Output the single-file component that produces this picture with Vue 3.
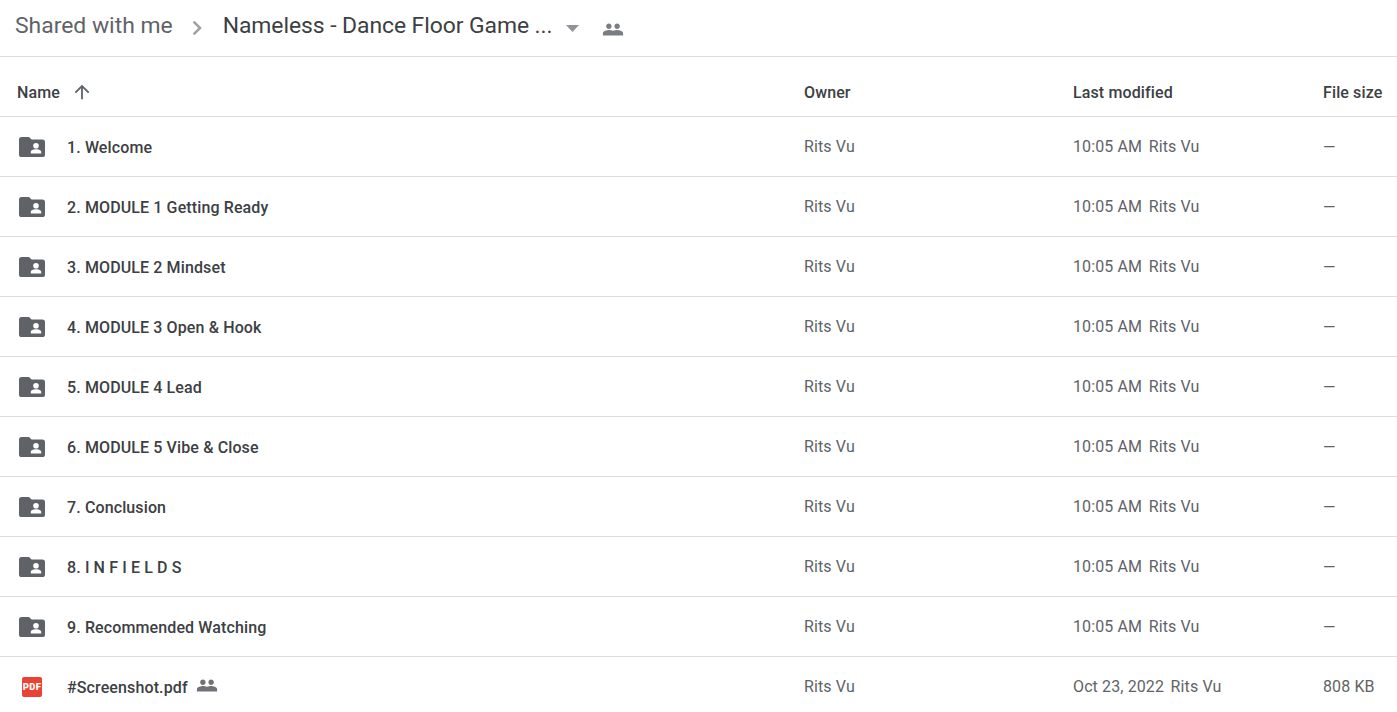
<script setup>
const folders = [
  '1. Welcome',
  '2. MODULE 1 Getting Ready',
  '3. MODULE 2 Mindset',
  '4. MODULE 3 Open & Hook',
  '5. MODULE 4 Lead',
  '6. MODULE 5 Vibe & Close',
  '7. Conclusion',
  '8. I N F I E L D S',
  '9. Recommended Watching'
]
const people = 'M16.5 13c-1.2 0-3.07.34-4.5 1-1.43-.67-3.3-1-4.5-1C5.33 13 1 14.08 1 16.25V19h22v-2.75c0-2.17-4.33-3.25-6.5-3.25zM7.5 12c1.66 0 3-1.34 3-3s-1.34-3-3-3-3 1.34-3 3 1.34 3 3 3zm9 0c1.66 0 3-1.34 3-3s-1.34-3-3-3-3 1.34-3 3 1.34 3 3 3z'
</script>

<template>
  <div class="page">
    <header class="crumbs">
      <span class="crumb-root">Shared with me</span>
      <svg class="chev" width="32" height="32" viewBox="0 0 24 24"><path d="M9.4 6.5 8 7.900l4.100 4.100L8 16.100l1.400 1.400 5.500-5.500z" fill="#a0a3a7"/></svg>
      <span class="crumb-current">Nameless - Dance Floor Game ...</span>
      <svg class="caret" width="13" height="7" viewBox="0 0 14 7" preserveAspectRatio="none"><path d="M0 0h14L7 7z" fill="#8f9296"/></svg>
      <svg class="crumb-people" width="22" height="22" viewBox="0 0 24 24"><path :d="people" fill="#7a7d82"/></svg>
    </header>

    <div class="row head">
      <div class="col-name">
        <span>Name</span>
        <svg class="arrow" width="22" height="22" viewBox="0 0 24 24"><path d="M4 12l1.410 1.410L11 7.830V20h2V7.830l5.580 5.590L20 12l-8-8z" fill="#5f6368"/></svg>
      </div>
      <div class="col-owner">Owner</div>
      <div class="col-mod">Last modified</div>
      <div class="col-size">File size</div>
    </div>

    <div v-for="f in folders" :key="f" class="row item">
      <div class="col-name">
        <svg class="icon" width="26" height="20" viewBox="0 0 26 20">
          <path fill-rule="evenodd" fill="#5f6368" d="M2.600 0H10l2.600 2.400H23.400A2.600 2.600 0 0 1 26 5v12.400A2.600 2.600 0 0 1 23.400 20H2.600A2.600 2.600 0 0 1 0 17.400V2.600A2.600 2.600 0 0 1 2.600 0ZM17 6a2.800 2.800 0 1 0 0 5.600 2.800 2.800 0 0 0 0-5.600ZM11.800 16.500h10.400v-1.700c0-1.800-3.500-2.500-5.200-2.500s-5.200.7-5.200 2.500Z"/>
        </svg>
        <span class="fname">{{ f }}</span>
      </div>
      <div class="col-owner">Rits Vu</div>
      <div class="col-mod"><span class="time">10:05 AM</span><span>Rits Vu</span></div>
      <div class="col-size dash">—</div>
    </div>

    <div class="row item last">
      <div class="col-name">
        <span class="pdf"><span>PDF</span></span>
        <span class="fname">#Screenshot.pdf</span>
        <svg class="file-people" width="22" height="22" viewBox="0 0 24 24"><path :d="people" fill="#6f7276"/></svg>
      </div>
      <div class="col-owner">Rits Vu</div>
      <div class="col-mod"><span class="time">Oct 23, 2022</span><span>Rits Vu</span></div>
      <div class="col-size">808 KB</div>
    </div>
  </div>
</template>

<style scoped>
.page {
  width: 1397px;
  height: 712px;
  overflow: hidden;
  background: #fff;
  font-family: Roboto, "Liberation Sans", sans-serif;
}
.crumbs {
  height: 56px;
  box-sizing: content-box;
  border-bottom: 1px solid #dadce0;
  display: flex;
  align-items: center;
  padding-left: 15px;
  font-family: Roboto, "Open Sans", sans-serif;
  font-size: 22.9px;
  line-height: 52px;
}
.crumb-root { color: #5f6368; padding-bottom: 4px; }
.chev { margin-left: 9px; }
.crumb-current { color: #3c4043; margin-left: 9px; padding-bottom: 4px; letter-spacing: -0.06px; }
.caret { margin-left: 13px; }
.crumb-people { margin-left: 23px; margin-top: 2px; }
.row {
  display: flex;
  align-items: center;
  border-bottom: 1px solid #dadce0;
  font-size: 16px;
  letter-spacing: 0.12px;
  color: #5f6368;
}
.head {
  height: 48px;
  padding-top: 11px;
  font-weight: 500;
  color: #3c4043;
}
.item { height: 59px; }
.last { border-bottom: 0; }
.col-name {
  width: 804px;
  flex: none;
  display: flex;
  align-items: center;
  box-sizing: border-box;
}
.head .col-name { padding-left: 17px; }
.item .col-name { padding-left: 19px; }
.arrow { margin-left: 11px; }
.fname {
  margin-left: 22px;
  padding-top: 1px;
  color: #3c4043;
  font-weight: 500;
}
.col-owner { width: 269px; flex: none; }
.col-mod { width: 250px; flex: none; display: flex; gap: 6.500px; }
.col-size { flex: none; }
.dash { font-weight: 400; padding-top: 1px; }
.pdf {
  width: 20px;
  height: 20px;
  margin-left: 3px;
  margin-right: 3px;
  flex: none;
  background: #ea4335;
  border-radius: 2px;
  display: flex;
  align-items: center;
  justify-content: center;
  color: #fff;
  font-size: 9.5px;
  font-weight: 900;
  letter-spacing: 0.3px;
  line-height: 20px;
}
.file-people { margin-left: 8.500px; margin-top: -3px; }
</style>
